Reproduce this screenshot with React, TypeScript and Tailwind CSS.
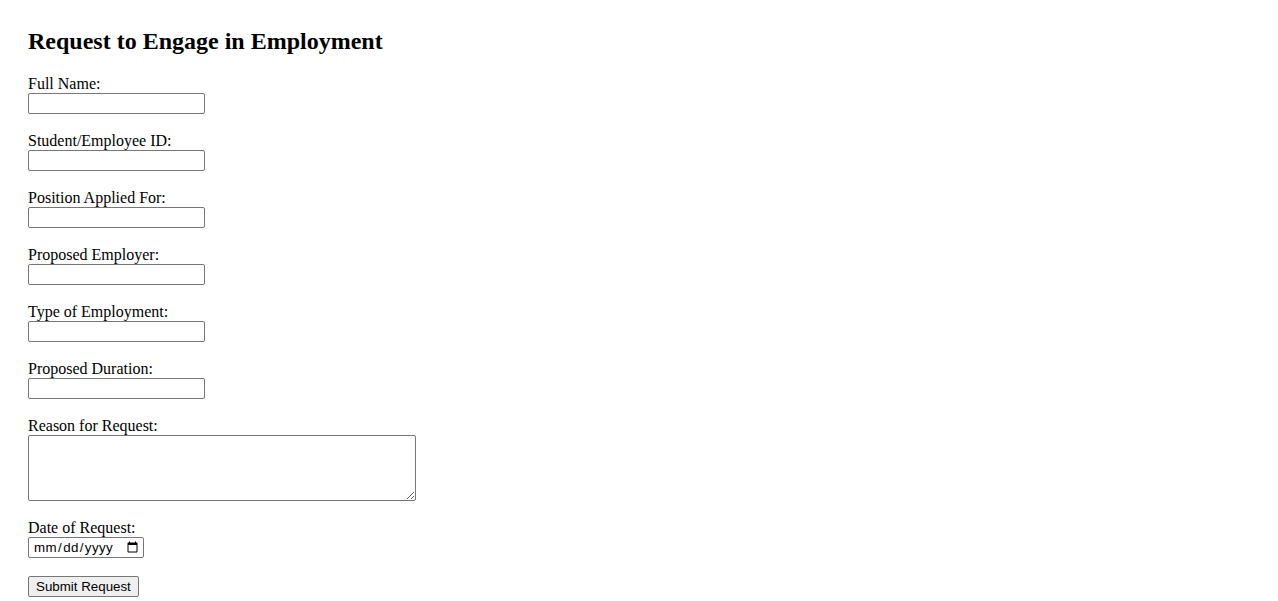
import React from 'react';

const fields = [
  { id: 'fullName', label: 'Full Name:' },
  { id: 'studentId', label: 'Student/Employee ID:' },
  { id: 'position', label: 'Position Applied For:' },
  { id: 'employer', label: 'Proposed Employer:' },
  { id: 'employmentType', label: 'Type of Employment:' },
  { id: 'duration', label: 'Proposed Duration:' },
];

export default function App() {
  return (
    <div className="min-h-screen bg-white text-black p-[8px] font-['Liberation_Serif',serif] text-[16px]">
      <div className="px-[20px]">
        <h2 className="text-[24px] font-bold leading-[27.5px] mt-[20px] mb-[19px]">
          Request to Engage in Employment
        </h2>

        <form onSubmit={(e) => e.preventDefault()}>
          {fields.map((f) => (
            <div key={f.id} className="mb-[18px]">
              <label htmlFor={f.id} className="block leading-[18px]">
                {f.label}
              </label>
              <input
                id={f.id}
                type="text"
                className="block w-[177px] h-[21px] border border-[#767676] rounded-[2px] bg-white px-[2px] text-[13.33px] font-['Liberation_Sans',sans-serif]"
              />
            </div>
          ))}

          <div className="mb-[18px]">
            <label htmlFor="reason" className="block leading-[18px]">
              Reason for Request:
            </label>
            <textarea
              id="reason"
              className="block w-[388px] h-[66px] border border-[#767676] rounded-[2px] bg-white px-[2px] text-[13.33px] font-['Liberation_Mono',monospace]"
            />
          </div>

          <div className="mb-[18px]">
            <label htmlFor="date" className="block leading-[18px]">
              Date of Request:
            </label>
            <input
              id="date"
              type="date"
              className="block w-[116px] h-[21px] border border-[#767676] rounded-[2px] bg-white pl-[4px] pr-[2px] pt-[1px] text-[13.33px] tracking-[0.4px] font-['Liberation_Sans',sans-serif]"
            />
          </div>

          <button
            type="submit"
            className="block h-[21px] px-[7px] border border-[#767676] rounded-[2px] bg-[#efefef] text-[13.33px] leading-[19px] font-['Liberation_Sans',sans-serif]"
          >
            Submit Request
          </button>
        </form>
      </div>
    </div>
  );
}
